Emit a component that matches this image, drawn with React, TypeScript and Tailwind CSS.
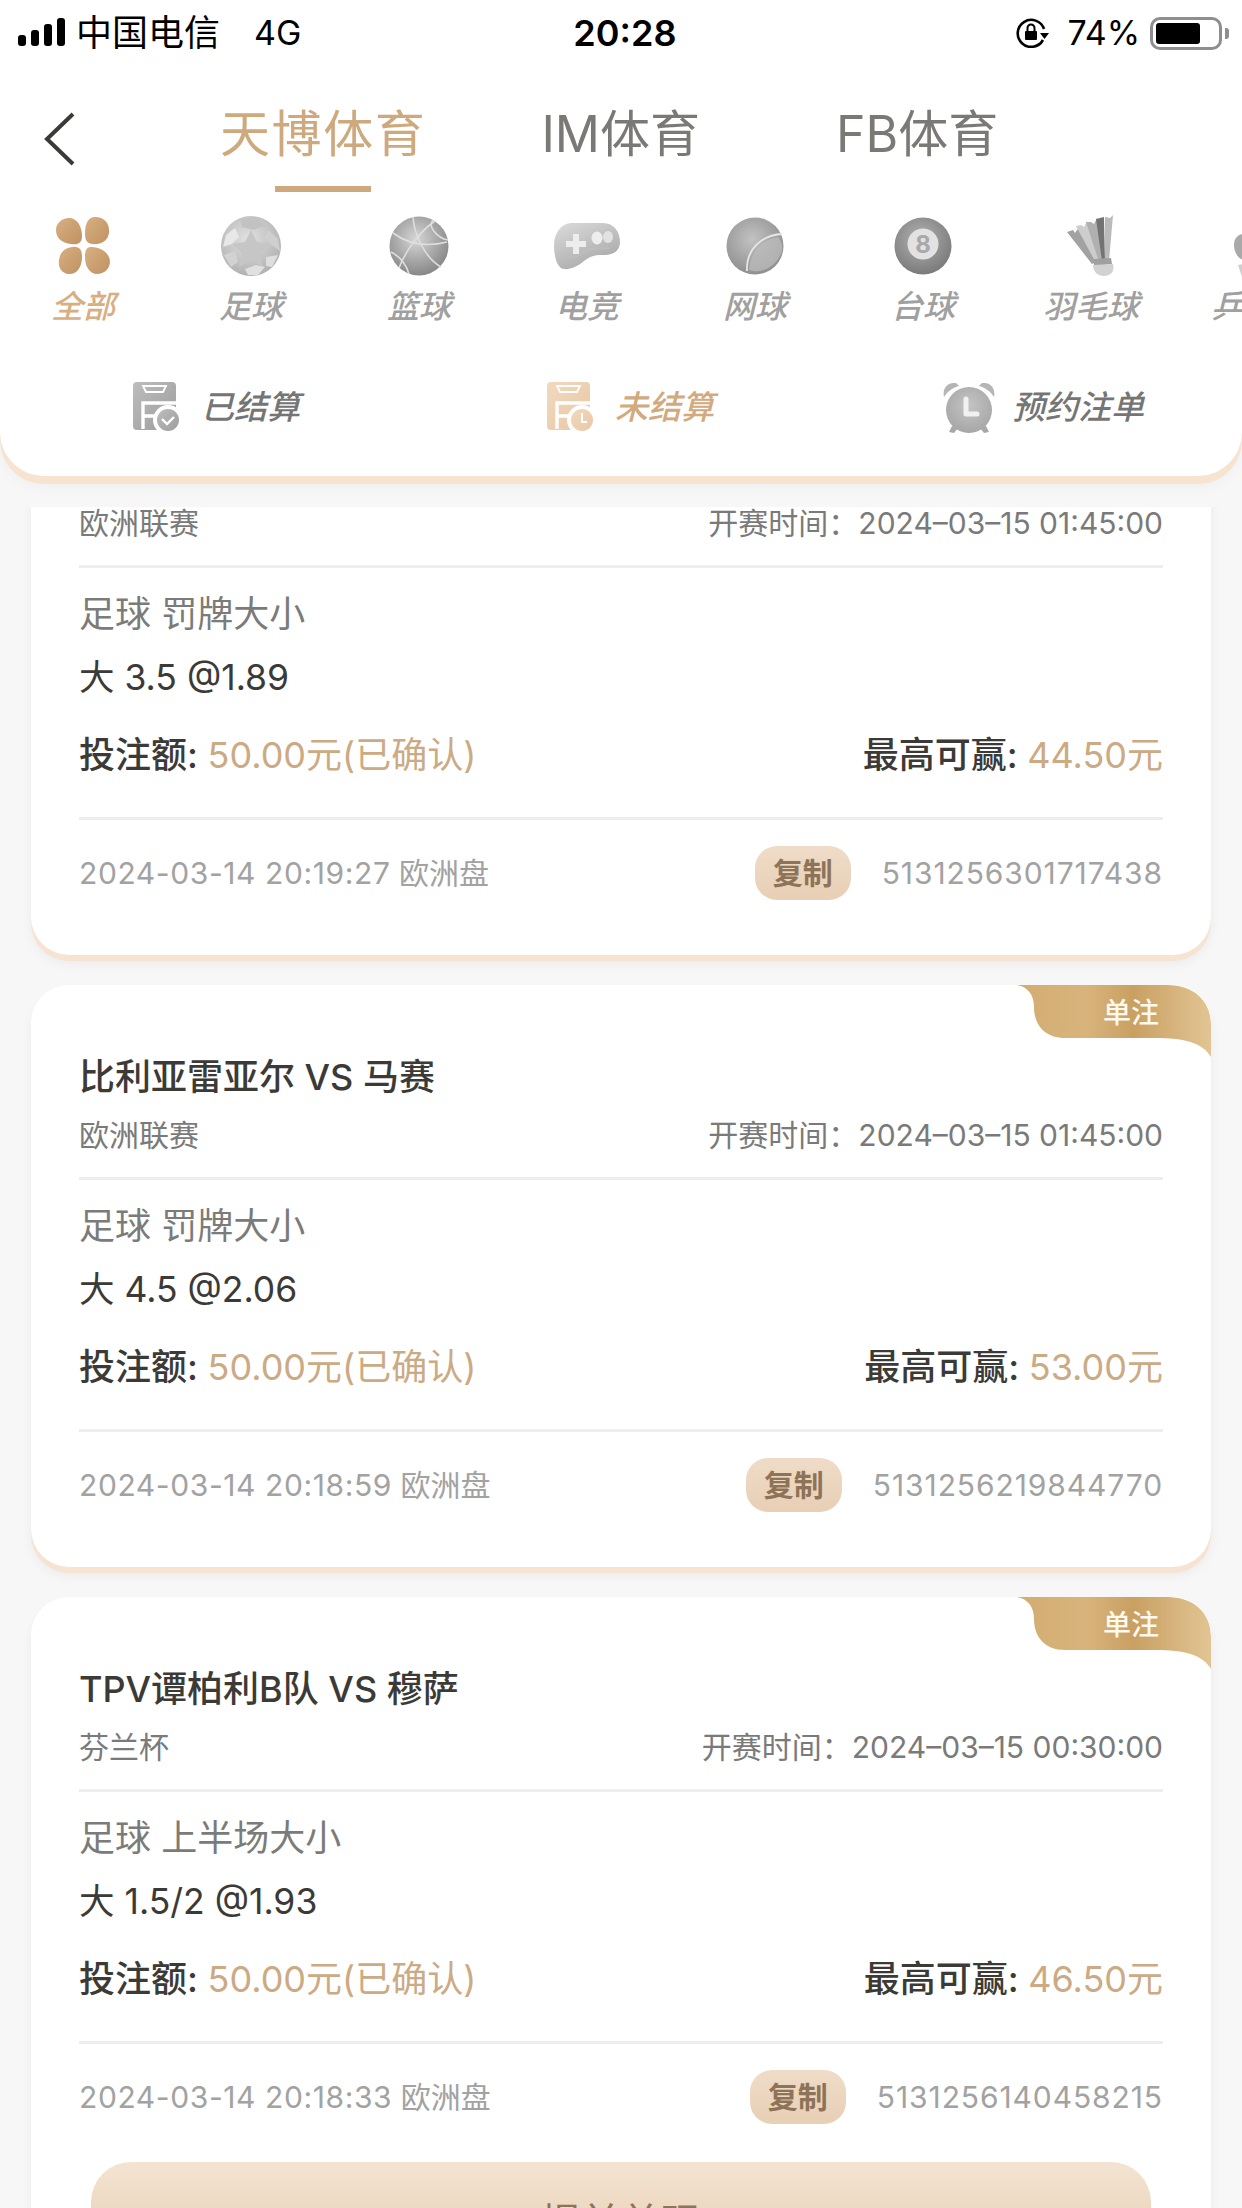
import React from 'react';

const GrayDefs = ({ id, light = '#e4e4e4', dark = '#8f8f8f' }: { id: string; light?: string; dark?: string }) => (
  <defs>
    <radialGradient id={id} cx="45%" cy="38%" r="68%">
      <stop offset="0%" stopColor={light} />
      <stop offset="100%" stopColor={dark} />
    </radialGradient>
  </defs>
);

const CloverIcon = () => (
  <svg width="56" height="60" viewBox="0 0 56 60">
    <defs>
      <linearGradient id="clover" x1="0" y1="0" x2="1" y2="1">
        <stop offset="0%" stopColor="#d8b083" />
        <stop offset="100%" stopColor="#bf9160" />
      </linearGradient>
    </defs>
    <path d="M14 2 C22 2 27 10 27 20 C27 27 23 29 16 28 C7 27 1 22 1 14 C1 7 7 2 14 2Z" fill="url(#clover)" />
    <path d="M40 1 C49 1 55 7 54 17 C53 24 47 29 37 28 C31 27 30 23 30 17 C30 8 33 1 40 1Z" fill="url(#clover)" />
    <path d="M17 31 C25 30 27 34 27 41 C27 51 22 59 13 58 C6 57 3 51 4 44 C5 36 10 32 17 31Z" fill="url(#clover)" />
    <path d="M35 31 C44 30 54 36 55 45 C55 53 49 58 42 58 C35 58 30 51 30 41 C30 35 31 32 35 31Z" fill="url(#clover)" />
  </svg>
);

const SoccerIcon = () => (
  <svg width="62" height="62" viewBox="0 0 62 62">
    <GrayDefs id="soccer" light="#e2e2e2" dark="#adadad" />
    <circle cx="31" cy="31" r="30" fill="url(#soccer)" />
    <path d="M31 15 L37 27 L50 29 L40 38 L43 52 L31 45 L19 52 L22 38 L12 29 L25 27Z" fill="#c6c6c6" />
    <path d="M21 4 L38 2 L44 11 L33 15 L22 12Z" fill="#c2c2c2" />
    <path d="M48 15 L58 24 L60 36 L50 29 L45 23Z" fill="#cfcfcf" />
    <path d="M6 20 L15 13 L19 22 L12 29 L3 32Z" fill="#e8e8e8" />
    <path d="M4 40 L15 36 L18 47 L11 52Z" fill="#d2d2d2" />
    <path d="M25 54 L36 50 L45 52 L38 60 L28 60Z" fill="#e0e0e0" />
    <path d="M46 42 L58 40 L52 52 L46 51Z" fill="#dedede" />
  </svg>
);

const BasketballIcon = () => (
  <svg width="60" height="60" viewBox="0 0 60 60">
    <GrayDefs id="basket" light="#d6d6d6" dark="#808080" />
    <circle cx="30" cy="30" r="29.5" fill="url(#basket)" />
    <g fill="none" stroke="#dedede" strokeWidth="1.6">
      <path d="M24 1 C25 18 36 42 52 51" />
      <path d="M4 17 C16 26 34 32 58 26" />
      <path d="M10 52 C16 36 30 16 46 5" />
      <path d="M2 36 C10 40 17 48 20 58" />
      <path d="M44 4 C38 10 48 22 59 24" />
    </g>
  </svg>
);

const GamepadIcon = () => (
  <svg width="66" height="48" viewBox="0 0 66 48">
    <defs>
      <linearGradient id="pad" x1="0" y1="0" x2="0.6" y2="1">
        <stop offset="0%" stopColor="#dcdcdc" />
        <stop offset="100%" stopColor="#a9a9a9" />
      </linearGradient>
    </defs>
    <path d="M17 1 L49 1 C60 1 66 10 66 20 C66 28 60 33 51 33 C42 33 38 33 30 39 C22 46 12 49 7 46 C2 42 0 32 0 24 C0 12 6 2 17 1Z" fill="url(#pad)" />
    <path d="M8 32 C12 38 22 36 28 31 C36 25 46 27 55 26" fill="none" stroke="#bdbdbd" strokeWidth="2" />
    <path d="M19 12 h6 v7 h7 v6 h-7 v7 h-6 v-7 h-7 v-6 h7z" fill="#ededed" />
    <ellipse cx="43" cy="16" rx="5.5" ry="6.5" fill="#ededed" />
    <ellipse cx="54" cy="15" rx="5" ry="6" fill="#e2e2e2" />
  </svg>
);

const TennisIcon = () => (
  <svg width="58" height="58" viewBox="0 0 58 58">
    <GrayDefs id="tennis" light="#c2c2c2" dark="#8b8b8b" />
    <circle cx="29" cy="29" r="28.5" fill="url(#tennis)" />
    <path d="M52 20 C38 22 24 34 23 53 C36 58 52 48 56 34 C57 28 55 23 52 20Z" fill="#bdbdbd" opacity="0.7" />
    <path d="M56 17 C38 18 20 30 21 54" fill="none" stroke="#e6e6e6" strokeWidth="1.8" />
  </svg>
);

const PoolIcon = () => (
  <svg width="58" height="58" viewBox="0 0 58 58">
    <GrayDefs id="pool" light="#b2b2b2" dark="#767676" />
    <circle cx="29" cy="29" r="28.5" fill="url(#pool)" />
    <circle cx="29" cy="27" r="15.5" fill="#e2e2e2" />
    <text x="29" y="35.5" textAnchor="middle" fontSize="24" fontWeight="700" fontFamily="Inter, sans-serif" fill="#a9a9a9">8</text>
  </svg>
);

const ShuttleIcon = () => (
  <svg width="48" height="62" viewBox="0 0 48 62">
    <path d="M0 17 L6 15 L8 18 L12 12 L30 47 L25 49Z" fill="#a2a2a2" />
    <path d="M9 11 L14 10 L17 12 L20 6 L34 46 L29 48Z" fill="#cdcdcd" />
    <path d="M19 7 L24 7 L27 9 L30 3 L37 46 L32 47Z" fill="#b0b0b0" />
    <path d="M29 4 L37 2 L38 46 L35 46Z" fill="#737373" />
    <path d="M38 2 L43 3 L46 0 L42 46 L38 46Z" fill="#bababa" />
    <path d="M27 44 L44 43 L45 49 L27 51Z" fill="#a0a0a0" />
    <path d="M26 50 L46 49 C48 56 44 61 37 61 C31 61 26 57 26 50Z" fill="#d2d2d2" />
  </svg>
);

const PaddleIcon = () => (
  <svg width="50" height="62" viewBox="0 0 50 62">
    <path d="M0 30 C0 22 5 18 16 18 C36 18 50 24 50 30 C50 38 36 46 14 46 C5 46 0 38 0 30Z" fill="#a9a9a9" />
    <path d="M4 50 L24 46 L24 54 L8 62Z" fill="#cfcfcf" />
  </svg>
);

const sports = [
  { name: '全部', icon: <CloverIcon />, active: true },
  { name: '足球', icon: <SoccerIcon /> },
  { name: '篮球', icon: <BasketballIcon /> },
  { name: '电竞', icon: <GamepadIcon /> },
  { name: '网球', icon: <TennisIcon /> },
  { name: '台球', icon: <PoolIcon /> },
  { name: '羽毛球', icon: <ShuttleIcon /> },
  { name: '乒乓球', icon: <PaddleIcon /> },
];

const ClipIcon = ({ id, from, to, clock }: { id: string; from: string; to: string; clock?: boolean }) => (
  <svg width="50" height="52" viewBox="0 0 50 52">
    <defs>
      <linearGradient id={id} x1="0" y1="0" x2="1" y2="1">
        <stop offset="0%" stopColor={from} />
        <stop offset="100%" stopColor={to} />
      </linearGradient>
    </defs>
    <rect x="0" y="0" width="43" height="48" rx="4" fill={`url(#${id})`} />
    <path d="M10 4 h23 l-3 6 h-17z" fill="none" stroke="#fff" strokeWidth="1.8" />
    <path d="M10 47 V21 H43 M10 34 H30" fill="none" stroke="#fff" strokeWidth="3.4" />
    <circle cx="35" cy="38" r="15" fill="#fff" />
    <circle cx="35" cy="38" r="11" fill={`url(#${id})`} />
    {clock ? (
      <path d="M35 31 V40 H40" fill="none" stroke="#fff" strokeWidth="2" />
    ) : (
      <path d="M29 37 L34 42 L41 35" fill="none" stroke="#fff" strokeWidth="2.4" />
    )}
  </svg>
);

const AlarmIcon = () => (
  <svg width="52" height="52" viewBox="0 0 52 52">
    <defs>
      <radialGradient id="alarm" cx="50%" cy="40%" r="70%">
        <stop offset="0%" stopColor="#c4c4c4" />
        <stop offset="100%" stopColor="#a2a2a2" />
      </radialGradient>
    </defs>
    <path d="M1 15 C-1 6 5 0 12 1 C14 1 15 3 16 4 C9 6 4 10 1 15Z" fill="#b5b5b5" />
    <path d="M51 15 C53 6 47 0 40 1 C38 1 37 3 36 4 C43 6 48 10 51 15Z" fill="#b5b5b5" />
    <path d="M9 44 L6 50 L11 51 L15 46Z" fill="#a8a8a8" />
    <path d="M43 44 L46 50 L41 51 L37 46Z" fill="#a8a8a8" />
    <circle cx="26" cy="28" r="23" fill="url(#alarm)" />
    <path d="M23 17 V32 H34" fill="none" stroke="#f1f1f1" strokeWidth="5" strokeLinecap="round" strokeLinejoin="round" />
  </svg>
);

const StatusBar = () => (
  <div className="h-[66px] flex items-center text-black relative">
    <div className="flex items-end gap-[5px] ml-[18px] h-[28px] pb-[1px]">
      <span className="w-[8px] h-[11px] bg-black rounded-[3px]" />
      <span className="w-[8px] h-[16px] bg-black rounded-[3px]" />
      <span className="w-[8px] h-[22px] bg-black rounded-[3px]" />
      <span className="w-[8px] h-[28px] bg-black rounded-[3px]" />
    </div>
    <span className="ml-[11px] text-[36px] leading-[44px]">中国电信</span>
    <span className="ml-[34px] text-[34px] leading-[44px]">4G</span>
    <span className="ml-[272px] text-[36px] leading-[44px] font-semibold">20:28</span>
    <svg className="ml-[339px]" width="34" height="30" viewBox="0 0 34 30">
      <path d="M27 22 A13.5 13.5 0 1 1 28 11" fill="none" stroke="#000" strokeWidth="2.6" />
      <path d="M24 15 H33 L28.5 21Z" fill="#000" />
      <rect x="9" y="13" width="12" height="9" rx="1" fill="#000" />
      <path d="M11.5 13 V10 A3.5 3.5 0 0 1 18.5 10 V13" fill="none" stroke="#000" strokeWidth="2" />
    </svg>
    <span className="ml-[18px] text-[34px] leading-[44px]">74%</span>
    <div className="ml-[10px] w-[72px] h-[33px] border-[3px] border-[#8e8e8e] rounded-[10px] p-[3px]">
      <div className="w-[44px] h-full bg-black rounded-[3px]" />
    </div>
    <span className="ml-[3px] w-[4px] h-[11px] bg-[#8e8e8e] rounded-r-[3px]" />
  </div>
);

const Header = () => (
  <div className="bg-white rounded-b-[44px] shadow-[0_8px_0_#f6e3d0,0_12px_14px_rgba(0,0,0,0.03)] relative z-10 h-[476px] overflow-hidden">
    <StatusBar />
    <div className="flex items-start pt-[38px] h-[126px]">
      <svg className="ml-[44px] mt-[8px]" width="32" height="54" viewBox="0 0 32 54">
        <path d="M29 2 L3 27 L29 52" fill="none" stroke="#3c3a36" strokeWidth="4" />
      </svg>
      <div className="ml-[144px] flex flex-col items-center">
        <span className="text-[50px] leading-[60px] tracking-[1.6px] text-[#cfa97e]">天博体育</span>
        <span className="mt-[22px] w-[96px] h-[6px] bg-[#cfa97e]" />
      </div>
      <span className="ml-[115px] text-[50px] leading-[60px] text-[#7a7975]">IM体育</span>
      <span className="ml-[136px] text-[50px] leading-[60px] text-[#7a7975]">FB体育</span>
    </div>
    <div className="flex pt-[23px] -ml-[1px]">
      {sports.map((s) => (
        <div key={s.name} className="w-[168px] shrink-0 flex flex-col items-center">
          <div className="h-[62px] flex items-center justify-center">{s.icon}</div>
          <span
            className={`mt-[10px] text-[32px] leading-[40px] italic font-medium whitespace-nowrap ${
              s.active ? 'text-[#d8ae82]' : 'text-[#a0a0a0]'
            }`}
          >
            {s.name}
          </span>
        </div>
      ))}
    </div>
    <div className="flex items-center mt-[55px] h-[52px]">
      <div className="ml-[133px] flex items-center gap-[18px] w-[172px]">
        <ClipIcon id="clipGray" from="#bdbdbd" to="#9c9c9c" />
        <span className="text-[33px] italic font-medium text-[#757575] whitespace-nowrap">已结算</span>
      </div>
      <div className="ml-[242px] flex items-center gap-[18px] w-[172px]">
        <ClipIcon id="clipGold" from="#f1d9bf" to="#e9c7a4" clock />
        <span className="text-[33px] italic font-medium text-[#d2aa7e] whitespace-nowrap">未结算</span>
      </div>
      <div className="ml-[224px] flex items-center gap-[17px]">
        <AlarmIcon />
        <span className="text-[33px] italic font-medium text-[#757575] whitespace-nowrap">预约注单</span>
      </div>
    </div>
  </div>
);

const SingleBadge = () => (
  <div className="absolute top-0 right-0 w-[194px] h-[72px]">
    <svg className="absolute inset-0" width="194" height="72" viewBox="0 0 194 72">
      <defs>
        <linearGradient id="badge" x1="0" y1="0" x2="1" y2="0">
          <stop offset="0%" stopColor="#d2ac72" />
          <stop offset="35%" stopColor="#d8b47c" />
          <stop offset="60%" stopColor="#c9a062" />
          <stop offset="100%" stopColor="#e2c594" />
        </linearGradient>
      </defs>
      <path
        d="M0 0 C11 2 17 10 17 22 C17 40 28 53 48 53 L138 53 C168 53 186 58 194 72 L194 40 C194 15 176 0 150 0Z"
        fill="url(#badge)"
      />
    </svg>
    <span className="absolute right-[52px] top-[8px] text-[28px] leading-[40px] font-medium text-[#fff9ee]">单注</span>
  </div>
);

type Bet = {
  title: string;
  league: string;
  start: string;
  market: string;
  pick: string;
  win: string;
  placed: string;
  order: string;
  cashout?: boolean;
};

const bets: Bet[] = [
  {
    title: '比利亚雷亚尔 VS 马赛',
    league: '欧洲联赛',
    start: '2024–03–15 01:45:00',
    market: '足球 罚牌大小',
    pick: '大 3.5 @1.89',
    win: '44.50元',
    placed: '2024-03-14 20:19:27',
    order: '5131256301717438',
  },
  {
    title: '比利亚雷亚尔 VS 马赛',
    league: '欧洲联赛',
    start: '2024–03–15 01:45:00',
    market: '足球 罚牌大小',
    pick: '大 4.5 @2.06',
    win: '53.00元',
    placed: '2024-03-14 20:18:59',
    order: '5131256219844770',
  },
  {
    title: 'TPV谭柏利B队 VS 穆萨',
    league: '芬兰杯',
    start: '2024–03–15 00:30:00',
    market: '足球 上半场大小',
    pick: '大 1.5/2 @1.93',
    win: '46.50元',
    placed: '2024-03-14 20:18:33',
    order: '5131256140458215',
    cashout: true,
  },
];

const BetCard = ({ bet }: { bet: Bet }) => (
  <div className="relative bg-white rounded-[38px] px-[48px] pt-[68px] pb-[55px] shadow-[0_6px_0_#f6e3d1,0_9px_12px_rgba(0,0,0,0.05)] overflow-hidden">
    <SingleBadge />
    <div className="text-[36px] leading-[48px] font-medium text-[#3c3a36] whitespace-nowrap">{bet.title}</div>
    <div className="mt-[14px] h-[40px] flex items-center justify-between text-[#7a7a7a]">
      <span className="text-[30px] leading-[40px]">{bet.league}</span>
      <span className="text-[30px] leading-[40px]">开赛时间：{bet.start}</span>
    </div>
    <div className="mt-[22px] h-[3px] bg-[#eeeeee]" />
    <div className="mt-[24px] text-[36px] leading-[44px] text-[#7b7b79]">{bet.market}</div>
    <div className="mt-[18px] text-[35.5px] leading-[48px] text-[#3c3a36]">{bet.pick}</div>
    <div className="mt-[29px] h-[48px] flex items-center justify-between text-[36px] leading-[48px]">
      <span className="font-medium text-[#3c3a36]">
        投注额: <span className="font-normal text-[#cbaa84]">50.00元(已确认)</span>
      </span>
      <span className="font-medium text-[#3c3a36]">
        最高可赢: <span className="font-normal text-[#cbaa84]">{bet.win}</span>
      </span>
    </div>
    <div className="mt-[38px] h-[3px] bg-[#eeeeee]" />
    <div className="mt-[26px] h-[54px] flex items-center justify-between text-[#a2a2a2] text-[30px]">
      <span>
        <span className="tracking-[0.6px]">{bet.placed}</span> 欧洲盘
      </span>
      <div className="flex items-center gap-[31px]">
        <span className="w-[96px] h-[54px] rounded-[22px] bg-gradient-to-b from-[#efdcc8] to-[#e8cfb5] text-[#8d7358] text-[30px] font-semibold flex items-center justify-center">
          复制
        </span>
        <span className="tracking-[0.9px]">{bet.order}</span>
      </div>
    </div>
    {bet.cashout && (
      <div className="mt-[38px] mx-[12px] h-[120px] rounded-t-[40px] bg-gradient-to-b from-[#f3e4d2] to-[#e6c9a9] flex justify-center pt-[36px] text-[40px] leading-[50px] text-[#8d7358]">
        提前兑现
      </div>
    )}
  </div>
);

export default function App() {
  return (
    <div className="w-[1242px] h-[2208px] overflow-hidden bg-[#f7f7f7] font-['Inter','Noto_Sans_CJK_SC',sans-serif]">
      <Header />
      <div className="mt-[31px] h-[1701px] overflow-hidden px-[31px]">
        <div className="-mt-[134px] flex flex-col gap-[30px]">
          {bets.map((bet) => (
            <BetCard key={bet.order} bet={bet} />
          ))}
        </div>
      </div>
    </div>
  );
}
